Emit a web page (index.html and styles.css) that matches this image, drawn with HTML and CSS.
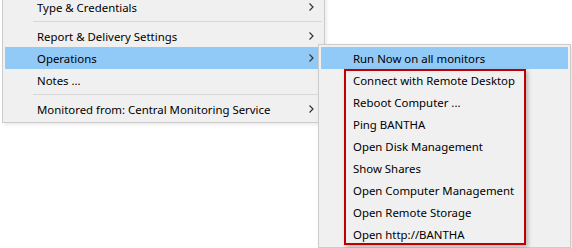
FILE: index.html
```html
<!DOCTYPE html>
<html>
<head>
<title>Monitor context menu</title>
<link rel="stylesheet" href="styles.css">
</head>
<body>
<div class="menu">
<div class="item">Type &amp; Credentials<svg class="arrow" width="5" height="8" viewBox="0 0 5 8"><polyline points="0.5,0.5 4,4 0.5,7.5"/></svg></div>
<div class="sep"></div>
<div class="item">Report &amp; Delivery Settings<svg class="arrow" width="5" height="8" viewBox="0 0 5 8"><polyline points="0.5,0.5 4,4 0.5,7.5"/></svg></div>
<div class="item active">Operations<svg class="arrow" width="5" height="8" viewBox="0 0 5 8"><polyline points="0.5,0.5 4,4 0.5,7.5"/></svg></div>
<div class="item">Notes ...</div>
<div class="sep"></div>
<div class="item">Monitored from: Central Monitoring Service<svg class="arrow" width="5" height="8" viewBox="0 0 5 8"><polyline points="0.5,0.5 4,4 0.5,7.5"/></svg></div>
</div>

<div class="submenu">
<div class="item active">Run Now on all monitors</div>
<div class="item">Connect with Remote Desktop</div>
<div class="item">Reboot Computer ...</div>
<div class="item">Ping BANTHA</div>
<div class="item">Open Disk Management</div>
<div class="item">Show Shares</div>
<div class="item">Open Computer Management</div>
<div class="item">Open Remote Storage</div>
<div class="item">Open http://BANTHA</div>
<div class="mark"></div>
</div>
</body>
</html>
```

FILE: styles.css
```css
body{
margin:0;
background:#fff;
font-family:"Noto Sans",sans-serif;
font-size:11.4px;
color:#000;
overflow:hidden;
height:248px;
}
.menu{
margin:-7px 0 0 2px;
width:317px;
padding:2px;
background:#f0f0f0;
border:1px solid #cccccc;
box-shadow:2px 2px 3px rgba(0,0,0,0.08);
}
.item{
display:flex;
align-items:center;
justify-content:space-between;
height:22px;
padding:0 8px 0 32px;
white-space:nowrap;
}
.item.active{
background:#91c9f7;
}
.arrow{
fill:none;
stroke:#333;
stroke-width:1.2;
}
.sep{
height:1px;
margin:3px 0 3px 28px;
background:#d7d7d7;
}
.submenu{
position:absolute;
left:318px;
top:44px;
width:247px;
padding:2px;
background:#f0f0f0;
border:1px solid #cccccc;
box-shadow:2px 2px 4px rgba(0,0,0,0.12);
}
.mark{
position:absolute;
left:25px;
top:24px;
width:178px;
height:172px;
border:2px solid #c00000;
box-shadow:2px 2px 4px rgba(0,0,0,0.25);
}
```
